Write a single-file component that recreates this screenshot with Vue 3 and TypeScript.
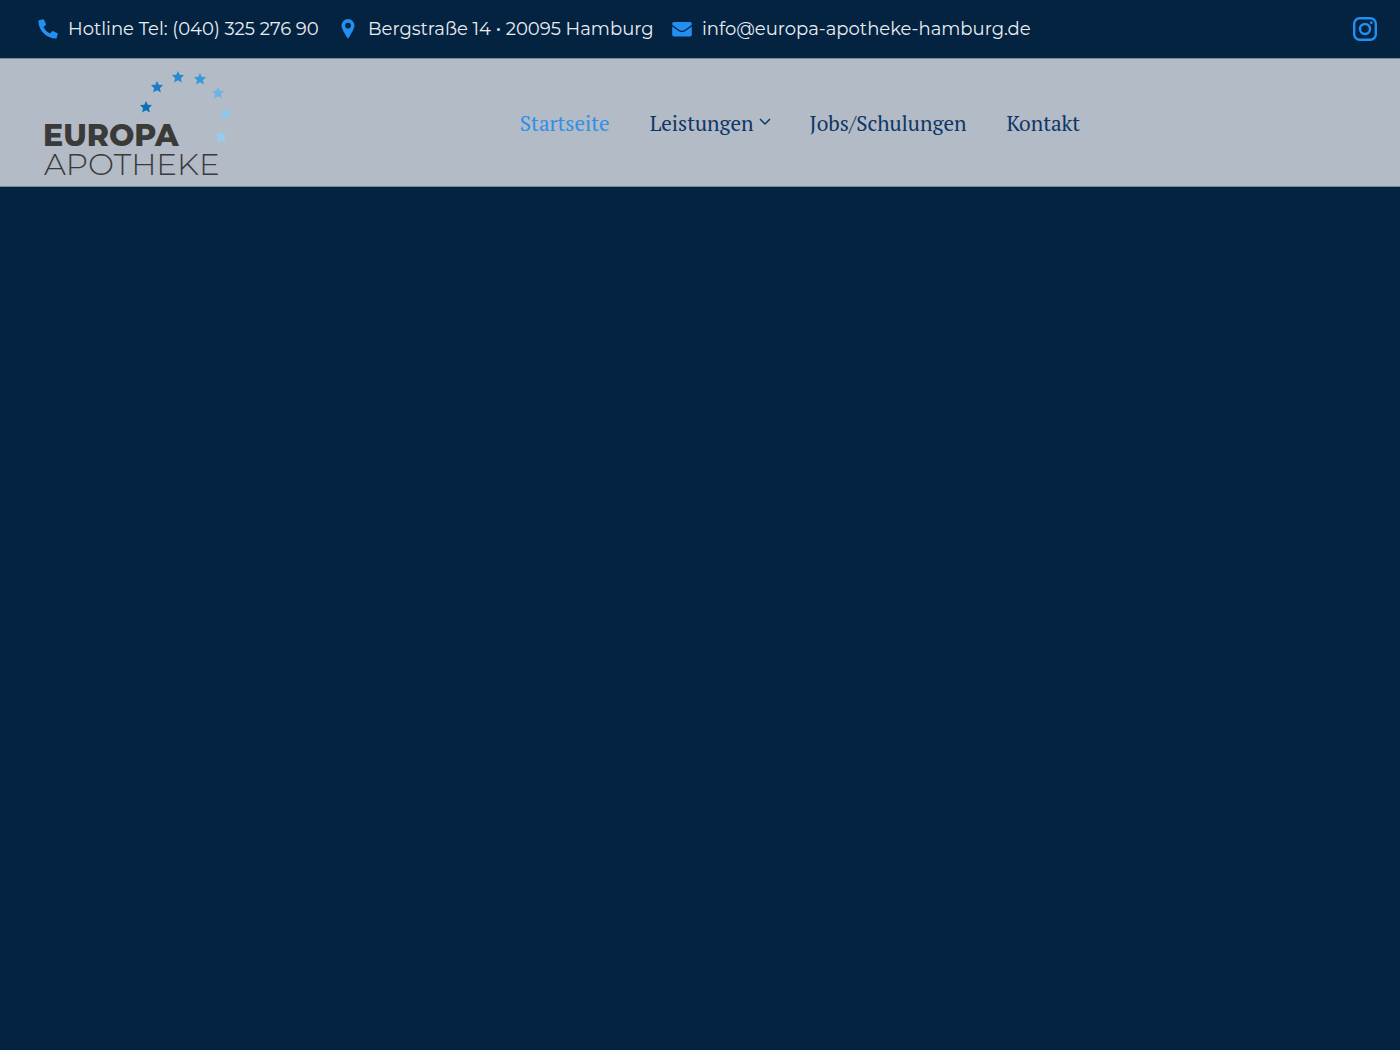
<script setup lang="ts">
interface Star { x: number; y: number; color: string }
interface NavItem { label: string; href: string; active?: boolean; submenu?: boolean }

const stars: Star[] = [
  { x: 106, y: 37, color: '#0873b5' },
  { x: 117, y: 17, color: '#1c7cc4' },
  { x: 138, y: 7, color: '#258bd0' },
  { x: 160, y: 9, color: '#379bdb' },
  { x: 178, y: 23, color: '#6bb4e4' },
  { x: 186, y: 44, color: '#8cc6ea' },
  { x: 181, y: 67, color: '#92cef2' },
]

const navItems: NavItem[] = [
  { label: 'Startseite', href: '#start', active: true },
  { label: 'Leistungen', href: '#leistungen', submenu: true },
  { label: 'Jobs/Schulungen', href: '#jobs' },
  { label: 'Kontakt', href: '#kontakt' },
]
</script>

<template>
  <div class="page">
    <div class="topbar">
      <ul class="contacts">
        <li>
          <a href="tel:+494032527690">
            <svg class="icon" viewBox="0 0 20 20" aria-hidden="true">
              <path d="M1.2 1.2 5 .3a1 1 0 0 1 1.1.6l1.8 4.2a1 1 0 0 1-.3 1.1L5.4 8a14 14 0 0 0 6.6 6.6l1.8-2.200a1 1 0 0 1 1.1-.3l4.2 1.8a1 1 0 0 1 .6 1.1l-.9 3.8a1 1 0 0 1-.9.8C8.5 19.6.4 11.5.4 2.1a1 1 0 0 1 .8-.9Z" />
            </svg>
            <span>Hotline Tel: (040) 325 276 90</span>
          </a>
        </li>
        <li>
          <a href="#anfahrt">
            <svg class="icon" viewBox="0 0 20 20" aria-hidden="true">
              <path fill-rule="evenodd" d="M10 0a6.5 6.5 0 0 1 6.5 6.5c0 3-3.5 8.500-5.900 12.500a.7.7 0 0 1-1.200 0C7 15 3.500 9.500 3.500 6.500A6.500 6.500 0 0 1 10 0Zm0 3.700a2.900 2.900 0 1 0 0 5.800 2.900 2.900 0 0 0 0-5.800Z" />
            </svg>
            <span>Bergstraße 14 • 20095 Hamburg</span>
          </a>
        </li>
        <li>
          <a href="mailto:info@europa-apotheke-hamburg.de">
            <svg class="icon" viewBox="0 0 20 20" aria-hidden="true">
              <path d="M2 3h16a1.800 1.800 0 0 1 1.800 1.800v.6C17.500 7.500 12 11.800 10 11.800S2.500 7.500.2 5.400v-.6A1.800 1.800 0 0 1 2 3Z" />
              <path d="M.2 7.200C3 9.500 8 13.200 10 13.200s7-3.700 9.800-6v8.500a1.800 1.800 0 0 1-1.800 1.800H2a1.800 1.800 0 0 1-1.800-1.800Z" />
            </svg>
            <span>info@europa-apotheke-hamburg.de</span>
          </a>
        </li>
      </ul>
      <a class="social" href="#instagram" aria-label="Instagram">
        <svg viewBox="0 0 24 24" aria-hidden="true">
          <rect x="1.200" y="1.200" width="21.600" height="21.600" rx="5.500" />
          <circle cx="12" cy="12" r="5" />
          <circle class="dot" cx="18.300" cy="5.700" r="1.400" />
        </svg>
      </a>
    </div>

    <header class="header">
      <a class="logo" href="#start" aria-label="Europa Apotheke">
        <svg viewBox="0 0 200 112" aria-hidden="true">
          <path
            v-for="star in stars"
            :key="star.x"
            :transform="`translate(${star.x} ${star.y})`"
            :fill="star.color"
            d="M0-6 1.700-2.200 6-1.900 2.900 1.200 3.900 5.500 0 3.200-3.900 5.500-2.900 1.200-6-1.900-1.700-2.200Z"
          />
          <text class="logo-strong" x="3" y="76">EUROPA</text>
          <text class="logo-light" x="4" y="105">APOTHEKE</text>
        </svg>
      </a>
      <nav class="nav" aria-label="Hauptmenü">
        <a v-for="item in navItems" :key="item.label" :href="item.href" :class="{ active: item.active }">
          {{ item.label }}
          <svg v-if="item.submenu" class="chevron" viewBox="0 0 10 10" aria-hidden="true">
            <path d="m0 1 5 5 5-5" />
          </svg>
        </a>
      </nav>
    </header>
  </div>
</template>

<style>
body {
  margin: 0;
  background: #032341;
}
</style>

<style scoped>
.page {
  min-height: 100vh;
  background: #032341;
}

a {
  color: inherit;
  text-decoration: none;
}

.topbar {
  display: flex;
  align-items: center;
  justify-content: space-between;
  height: 58px;
  padding: 0 23px 0 38px;
  color: #e9edf2;
  font-family: Montserrat, Inter, sans-serif;
  font-size: 18px;
  line-height: 24px;
}

.contacts {
  display: grid;
  grid-template-columns: 300px 334px auto;
  margin: 0;
  padding: 0;
  list-style: none;
}

.contacts a {
  display: flex;
  align-items: center;
  gap: 10px;
  white-space: nowrap;
}

.icon {
  flex: none;
  width: 20px;
  height: 20px;
  fill: #2290f2;
}

.social svg {
  display: block;
  width: 24px;
  height: 24px;
  fill: none;
  stroke: #2290f2;
  stroke-width: 2.4;
}

.social .dot {
  fill: #2290f2;
  stroke: none;
}

.header {
  display: flex;
  align-items: center;
  min-height: 127px;
  border: solid #7c8898;
  border-width: 1px 0;
  background: #b3bbc7;
}

.logo {
  flex: none;
  width: 200px;
  margin-left: 40px;
  margin-right: -40px;
}

.logo svg {
  display: block;
  width: 200px;
  height: 112px;
  margin-top: 6px;
}

.logo text {
  fill: #3a3a39;
}

.logo-strong {
  font: 800 30px Montserrat, Inter, sans-serif;
}

.logo-light {
  font: 300 31px Montserrat, Inter, sans-serif;
}

.nav {
  display: flex;
  flex: 1;
  justify-content: center;
  gap: 40px;
  color: #0f3765;
  font-family: "PT Serif", "Noto Serif", "Liberation Serif", serif;
  font-size: 21px;
  line-height: 32px;
}

.nav a {
  display: flex;
  align-items: center;
  gap: 6px;
}

.nav .active {
  color: #2f90e8;
}

.chevron {
  width: 10px;
  height: 10px;
  overflow: visible;
  fill: none;
  stroke: currentColor;
  stroke-width: 1.5;
}
</style>
